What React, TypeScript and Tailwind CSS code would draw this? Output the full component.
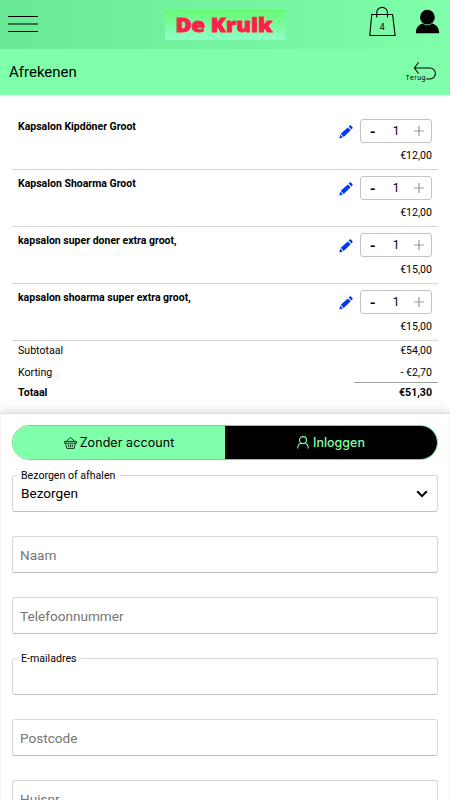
import { clsx } from "clsx";

const ITEMS = [
  { name: "Kapsalon Kipdöner Groot", price: "€12,00" },
  { name: "Kapsalon Shoarma Groot", price: "€12,00" },
  { name: "kapsalon super doner extra groot,", price: "€15,00" },
  { name: "kapsalon shoarma super extra groot,", price: "€15,00" },
];

function Logo() {
  return (
    <svg width="120" height="30" viewBox="0 0 120 30" className="block">
      <defs>
        <linearGradient id="logo-bg" x1="0" y1="0" x2="0" y2="1">
          <stop offset="0" stopColor="#66f972" />
          <stop offset="1" stopColor="#8effcb" />
        </linearGradient>
      </defs>
      <rect width="120" height="30" fill="url(#logo-bg)" />
      <text
        x="10.5"
        y="22.3"
        fontSize="19"
        fontWeight="900"
        textLength="97"
        lengthAdjust="spacingAndGlyphs"
        fill="#ff1f4b"
        stroke="#ff1f4b"
        strokeWidth="0.9"
        style={{ fontFamily: "'Open Sans', sans-serif" }}
      >
        De Kruik
      </text>
    </svg>
  );
}

function Header() {
  return (
    <header className="flex h-[49px] items-start justify-between bg-linear-to-r from-[#69e896] to-[#7fffaa]">
      <button aria-label="Menu" className="ml-2 mt-[15px] w-[30px]">
        <svg width="30" height="18" viewBox="0 0 30 18" className="block">
          <path d="M0 1.5h30M0 16.5h30" stroke="#000" strokeWidth="1.1" />
          <path d="M0 9h30" stroke="#267044" strokeWidth="1.9" />
        </svg>
      </button>
      <div className="ml-[127px] mt-2.5">
        <Logo />
      </div>
      <div className="ml-auto mr-[10px] mt-[6px] flex gap-[19px]">
        <svg width="28" height="31" viewBox="0 0 28 31" fill="none" stroke="#000" strokeWidth="1.1">
          <path d="M3.2 8.5h20.9L26.6 29.5H1.3z" transform="translate(-.5)" />
          <path d="M8.2 11.5V6.8a5.4 5.4 0 0 1 10.8 0v4.7" transform="translate(-.5)" />
          <text x="13.2" y="24" fontSize="8.5" textAnchor="middle" fill="#000" stroke="none" className="font-['Inter',sans-serif]">
            4
          </text>
        </svg>
        <svg width="24" height="28" viewBox="0 0 24 28" className="mt-[3px]">
          <circle cx="11.4" cy="8.2" r="7.4" />
          <path d="M-.2 24.3c0-5.8 3-8.8 6.7-9.8 2.8 2.4 7 2.4 9.8 0 3.7 1 6.9 4 6.9 9.8z" />
        </svg>
      </div>
    </header>
  );
}

function TitleBar() {
  return (
    <div className="flex h-[46px] items-center justify-between bg-[#7fffaa] pl-[9px] pr-[13px]">
      <h1 className="text-[15px] leading-5">Afrekenen</h1>
      <svg width="32" height="22" viewBox="0 0 32 22" fill="none" stroke="#000" strokeWidth="1.1" aria-label="Terug">
        <path d="M14 1.2 9.8 7l4.2 5.5M9.8 7h15.5a5.4 5.4 0 0 1 0 11h-3.7" transform="translate(-.4)" />
        <text x=".5" y="18.6" fontSize="7" textLength="20" fill="#000" stroke="none" className="font-['Roboto',sans-serif]">
          Terug
        </text>
      </svg>
    </div>
  );
}

function Pencil() {
  return (
    <svg width="14" height="14" viewBox="0 0 14 14" fill="#0037f5" className="mt-[6px]">
      <path d="M1.8 8.7 8.8 2.4l2.9 2.9-7 6.7z" />
      <path d="M9.6 1.5 10.8.4c.3-.3.8-.3 1.1 0l1.6 1.8c.3.3.3.8 0 1.1l-1.1 1.2z" />
      <path d="m1.2 9.6 2.7 2.9-3.6.9z" />
    </svg>
  );
}

function CartItem({ name, price }: { name: string; price: string }) {
  return (
    <li className="flex h-[57px] justify-between border-b border-[#d6d6d6] px-1.5">
      <span className="pt-[6px] text-[10.5px] font-bold leading-4">{name}</span>
      <div className="flex flex-col items-end pt-[6px]">
        <div className="flex gap-[7px]">
          <Pencil />
          <div className="flex h-6 w-[72px] items-center justify-between rounded-[3px] border border-[#c4c4c4] pl-[9px] pr-[7px]">
            <button className="pt-0.5 text-base font-medium leading-none">-</button>
            <span className="pl-[3px] text-xs">1</span>
            <button aria-label="Meer">
              <svg width="10" height="10" viewBox="0 0 10 10" className="block">
                <path d="M0 5h10M5 0v10" stroke="#999" strokeWidth="1.2" />
              </svg>
            </button>
          </div>
        </div>
        <span className="mt-[5px] text-[10.6px] leading-4">{price}</span>
      </div>
    </li>
  );
}

function Totals() {
  return (
    <div className="text-[10.6px] leading-4">
      <div className="flex justify-between px-1.5 pt-[1.5px]">
        <span>Subtotaal</span>
        <span>€54,00</span>
      </div>
      <div className="flex justify-between px-1.5 pt-[6px]">
        <span>Korting</span>
        <span>- €2,70</span>
      </div>
      <div className="ml-auto mt-[1px] h-px w-[84px] bg-[#a3a3a3]" />
      <div className="flex justify-between px-1.5 pt-[2px] font-bold">
        <span>Totaal</span>
        <span>€51,30</span>
      </div>
    </div>
  );
}

function AccountTabs() {
  return (
    <div className="flex h-[35px] overflow-hidden rounded-full border border-[#5fe08c] font-['Inter',sans-serif] text-[12.5px]">
      <button className="flex w-[212px] items-center justify-center gap-[3px] bg-[#7fffaa]">
        <svg width="13" height="12" viewBox="0 0 13 12" fill="none" stroke="#000" strokeWidth="0.8" strokeLinejoin="round">
          <path d="M.5 4.4h12v1.8H.5zM1.6 6.2l1.2 5.2h7.4l1.2-5.2M2.5 4.2 6.5.5l4 3.7M4.7 7.5v2.6M6.5 7.5v2.6M8.3 7.5v2.6" />
        </svg>
        <span className="pt-px tracking-[0.08px]">Zonder account</span>
      </button>
      <button className="flex flex-1 items-center justify-center gap-1 bg-black text-[#7fffaa]">
        <svg width="12" height="13" viewBox="0 0 12 13" fill="none" stroke="currentColor" strokeWidth="1.1">
          <circle cx="6" cy="4.1" r="3.5" />
          <path d="M.6 12.6C.7 9.6 2 8 3.9 7.1M11.4 12.6C11.3 9.6 10 8 8.1 7.1" />
        </svg>
        <span className="pt-px text-[12.5px] font-medium">Inloggen</span>
      </button>
    </div>
  );
}

type FieldProps = { label: string; value?: string; floating?: boolean; select?: boolean };

function Field({ label, value, floating, select }: FieldProps) {
  return (
    <div className="relative flex h-[37px] items-center justify-between rounded-[3px] border border-[#d8d8d8] border-b-[#bdbdbd] px-2 text-[13.6px]">
      {floating && (
        <span className="absolute -top-2 left-1 bg-white pl-1 pr-[5px] text-[10.6px] leading-[15px]">{label}</span>
      )}
      <span className={clsx(floating ? "text-black" : "-ml-px pt-px text-[#757575]")}>
        {floating ? value : label}
      </span>
      {select && (
        <svg width="12" height="8" viewBox="0 0 12 8" fill="none" stroke="#000" strokeWidth="2" className="mr-px">
          <path d="m1.2 1.3 4.8 4.8 4.8-4.8" />
        </svg>
      )}
    </div>
  );
}

export default function App() {
  return (
    <div className="h-[800px] w-[450px] overflow-hidden bg-white font-['Roboto',sans-serif] text-black">
      <Header />
      <TitleBar />
      <section className="h-[318px] px-3 pt-[18px]">
        <ul>
          {ITEMS.map((item) => (
            <CartItem key={item.name} {...item} />
          ))}
        </ul>
        <Totals />
      </section>
      <section className="border border-[#f3f3f3] border-t-[#dcdcdc] bg-white px-[11px] pt-[11px] shadow-[0_0_12px_rgba(0,0,0,0.2)]">
        <AccountTabs />
        <form className="mt-[15px] flex flex-col gap-6">
          <Field label="Bezorgen of afhalen" value="Bezorgen" floating select />
          <Field label="Naam" />
          <Field label="Telefoonnummer" />
          <Field label="E-mailadres" floating />
          <Field label="Postcode" />
          <Field label="Huisnr" />
        </form>
      </section>
    </div>
  );
}
